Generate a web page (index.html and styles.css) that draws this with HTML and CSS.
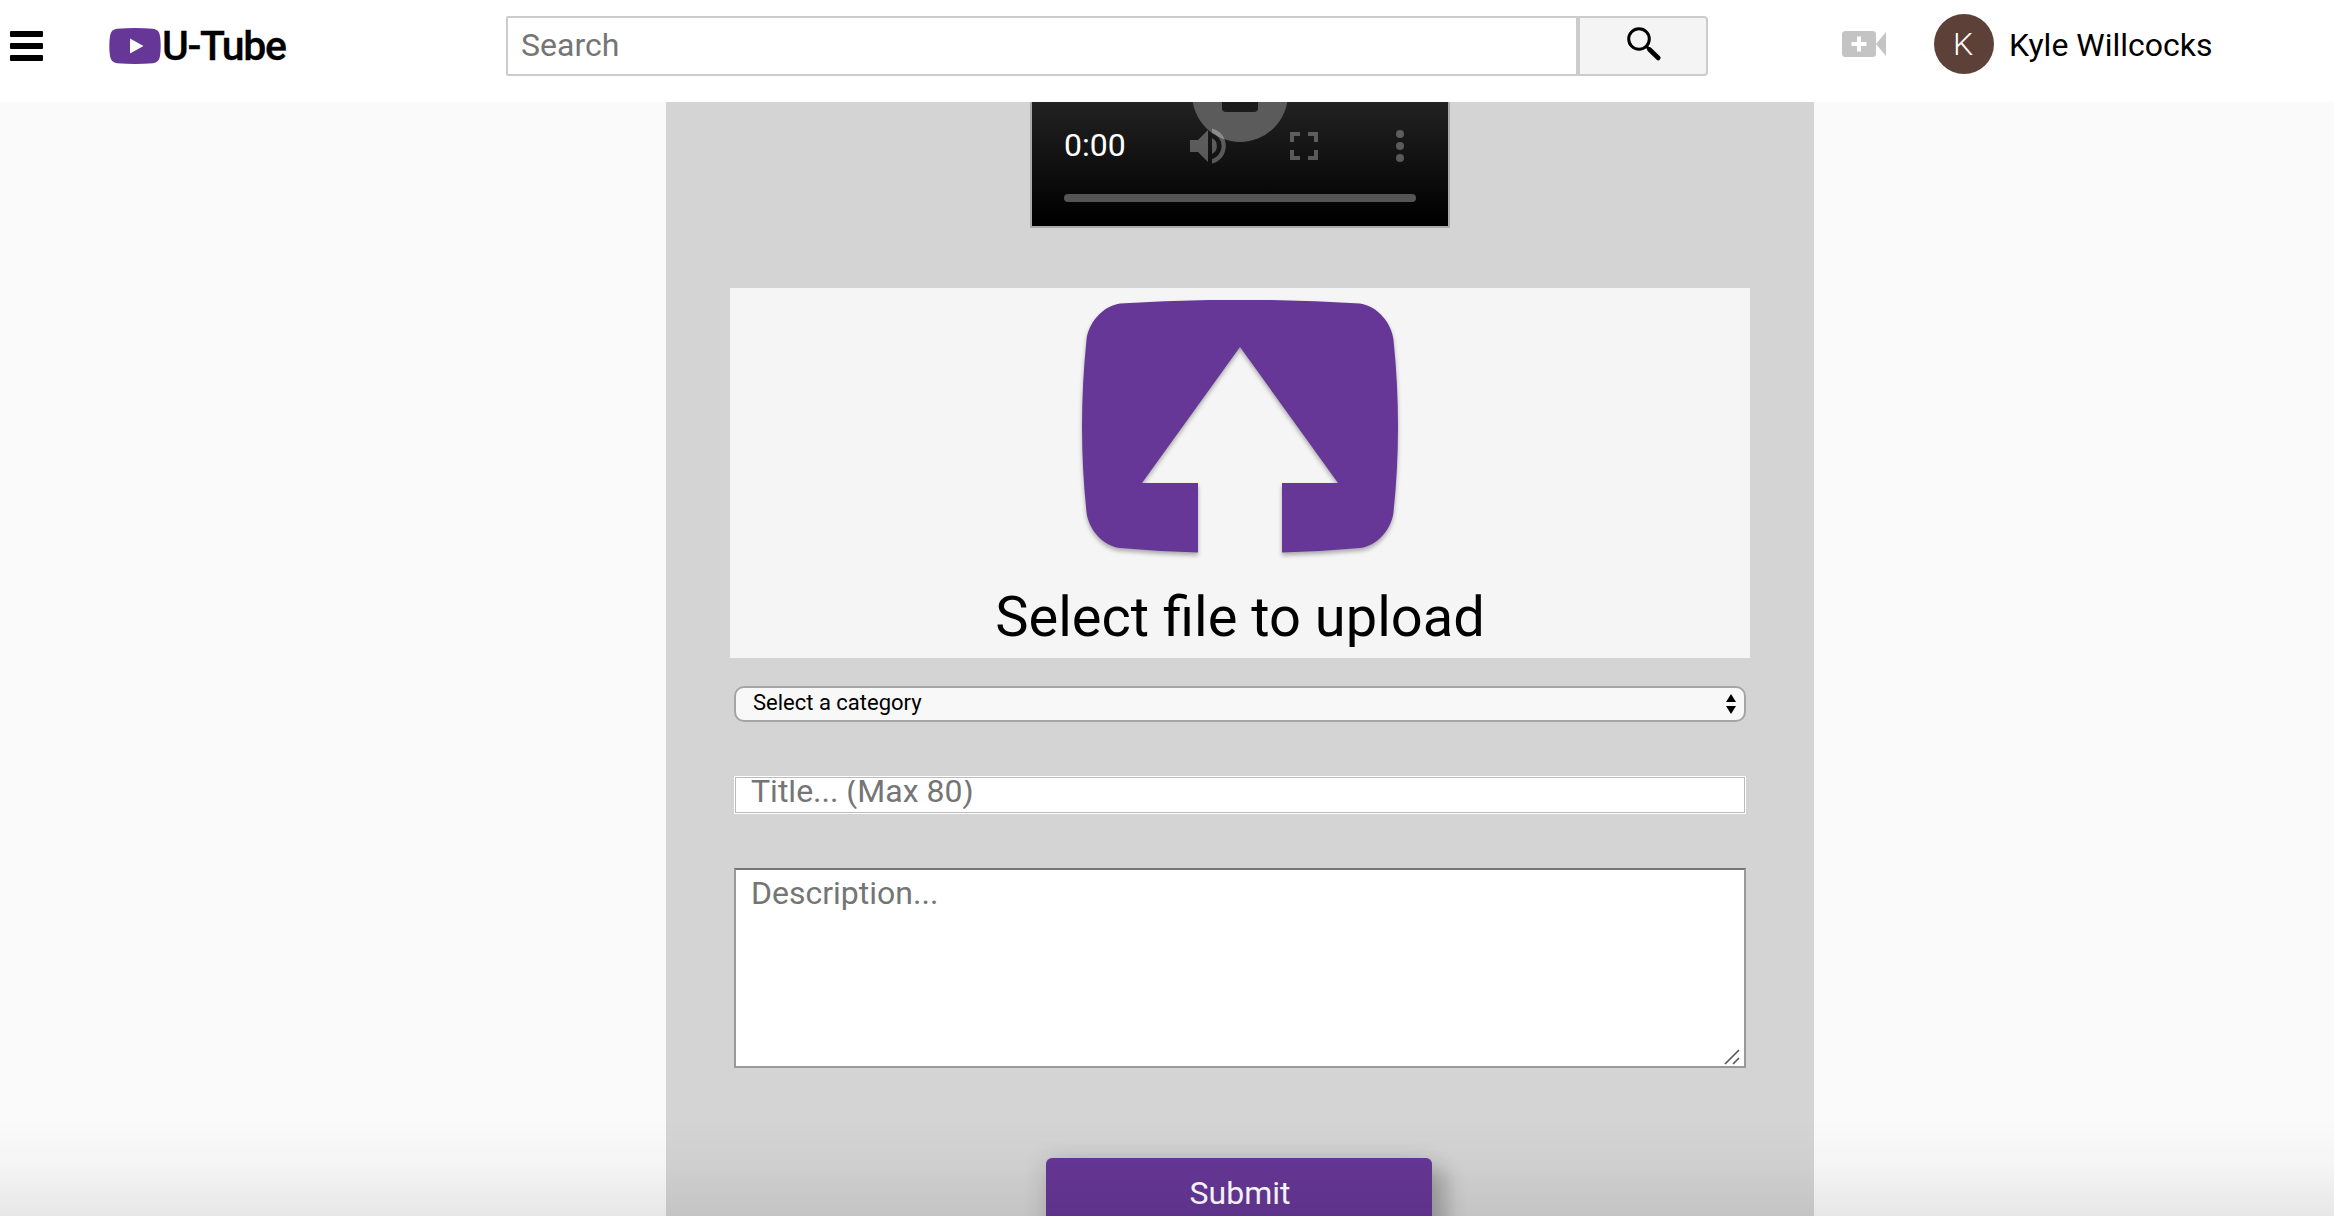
FILE: index.html
```html
<!DOCTYPE html>
<html lang="en">
<head>
<meta charset="utf-8">
<title>U-Tube</title>
<link rel="stylesheet" href="styles.css">
</head>
<body>
<header class="header">
  <button class="menu" aria-label="Menu"><span></span><span></span><span></span></button>
  <a class="brand">
    <svg class="brand-mark" viewBox="0 0 52 36"><path d="M8 .8Q26-.8 44 .8Q50 1.400 51 8Q52.400 18 51 28Q50 34.600 44 35.200Q26 36.800 8 35.200Q2 34.600 1 28Q-.4 18 1 8Q2 1.400 8 .8Z" fill="#663796"/><path d="M21 10.500V25.500L34.500 18Z" fill="#fff"/></svg>
    <span class="brand-name">U-Tube</span>
  </a>
  <form class="search">
    <input class="search-input" type="text" placeholder="Search">
    <button class="search-button" type="button" aria-label="Search">
      <svg width="36" height="36" viewBox="0 0 36 36"><circle cx="13" cy="13" r="10.300" fill="none" stroke="#000" stroke-width="3"/><path d="M20 20L24 24" stroke="#000" stroke-width="3"/><path d="M23.500 23.500L32.300 32" stroke="#000" stroke-width="4.600" stroke-linecap="round"/></svg>
    </button>
  </form>
  <svg class="camera" width="44" height="26" viewBox="0 0 44 26"><rect width="34" height="26" rx="3.500" fill="#c4c4c4"/><path d="M34 13L44 1V25Z" fill="#c4c4c4"/><path d="M17 5.500V20.500M9.500 13H24.500" stroke="#fff" stroke-width="4"/></svg>
  <div class="avatar">K</div>
  <span class="user">Kyle Willcocks</span>
</header>
<main class="panel">
  <div class="video">
    <div class="play"><i></i></div>
    <div class="controls">
      <span class="time">0:00</span>
      <svg class="volume" width="36" height="36" viewBox="0 0 36 36"><path d="M0 12H8L18 2V34L8 24H0ZM22 10A9 9 0 0 1 22 26ZM22 .5A18 18 0 0 1 22 35.500V31.300A14 14 0 0 0 22 4.700Z"/></svg>
      <svg class="fullscreen" width="28" height="28" viewBox="0 0 28 28"><path d="M0 0H10V4H4V10H0ZM18 0H28V10H24V4H18ZM0 18H4V24H10V28H0ZM24 18H28V28H18V24H24Z"/></svg>
      <svg class="more" width="8" height="32" viewBox="0 0 8 32"><circle cx="4" cy="4" r="4"/><circle cx="4" cy="16" r="4"/><circle cx="4" cy="28" r="4"/></svg>
    </div>
    <div class="progress"></div>
  </div>
  <section class="upload">
    <svg class="upload-icon" width="316" height="262" viewBox="0 0 316 262"><path d="M38 3.500Q158-4 278 3.500C296 6 310 24 311.500 40Q320.500 127 311.500 212C310 228 296 246 278 248Q240 251.500 200 252.500V183H256L158 47L60 183H116V252.500Q76 251.500 38 248C20 246 6 228 4.500 212Q-4.500 127 4.500 40C6 24 20 6 38 3.500Z" fill="#663796"/></svg>
    <span class="upload-label">Select file to upload</span>
  </section>
  <div class="select">
    <span>Select a category</span>
    <svg width="10" height="20" viewBox="0 0 10 20"><path d="M0 8L5 0L10 8ZM0 12H10L5 20Z"/></svg>
  </div>
  <div class="title-field"><span>Title... (Max 80)</span></div>
  <div class="description">
    <span>Description...</span>
    <svg width="16" height="16" viewBox="0 0 16 16"><path d="M1 15L15 1M9 15L15 9" stroke="#555" stroke-width="1.600"/></svg>
  </div>
  <button class="submit">Submit</button>
</main>
<div class="fade"></div>
</body>
</html>
```
FILE: styles.css
```css
* { box-sizing: border-box; }
body {
  margin: 0;
  height: 1216px;
  overflow: hidden;
  background: #fafafa;
  color: #000;
  font: 32px/38px Roboto, sans-serif;
}
button { border: 0; padding: 0; font: inherit; }
svg { display: block; flex: none; }

.header {
  position: relative;
  z-index: 1;
  display: flex;
  align-items: flex-start;
  height: 102px;
  padding-left: 10px;
  background: #fff;
}
.menu {
  display: flex;
  flex-direction: column;
  gap: 6px;
  width: 33px;
  margin-top: 31px;
  background: none;
}
.menu span { height: 6px; border-radius: 1px; background: #000; }
.brand { display: flex; width: 463px; padding: 28px 0 0 66px; }
.brand-mark { width: 52px; height: 36px; }
.brand-name {
  margin: -1px 0 0 1px;
  font-size: 41px;
  font-weight: 500;
  letter-spacing: -1.4px;
  -webkit-text-stroke: .3px #000;
}
.search { display: flex; width: 1202px; height: 60px; margin-top: 16px; }
.search-input {
  width: 1072px;
  padding: 0 13px 2px;
  border: 2px solid #ccc;
  border-radius: 2px 0 0 2px;
  background: #fff;
  font: inherit;
}
.search-input::placeholder { color: #757575; }
.search-button {
  display: flex;
  align-items: flex-start;
  width: 130px;
  padding: 8px 0 0 46px;
  border: 2px solid #ccc;
  border-radius: 0 4px 4px 0;
  background: #f4f4f4;
}
.camera { margin: 31px 0 0 134px; }
.avatar {
  width: 60px;
  height: 60px;
  margin: 14px 0 0 48px;
  padding-right: 2px;
  border-radius: 50%;
  background: #5d4037;
  color: #fff;
  font-weight: 300;
  line-height: 61px;
  text-align: center;
}
.user { margin: 26px 0 0 15px; }

.panel {
  display: flex;
  flex-direction: column;
  align-items: center;
  width: 1148px;
  height: 1114px;
  margin-left: 666px;
  background: #d4d4d4;
}
.panel > * { flex: none; }
.video {
  position: relative;
  width: 420px;
  height: 126px;
  overflow: hidden;
  border: 2px solid #aaa;
  border-top: 0;
  background: linear-gradient(#222, #000 95%);
}
.play {
  position: absolute;
  left: 160px;
  top: -56px;
  width: 96px;
  height: 96px;
  border-radius: 50%;
  background: #5b5b5b;
}
.play i {
  display: block;
  width: 36px;
  height: 36px;
  margin: 30px;
  border-radius: 4px;
  background: #1b1b1b;
}
.controls {
  position: relative;
  display: flex;
  align-items: center;
  height: 88px;
  padding: 0 44px 0 32px;
  fill: rgba(255, 255, 255, .3);
}
.time { width: 126px; padding-bottom: 2px; color: #fff; }
.fullscreen { margin-left: 64px; }
.more { margin-left: 78px; }
.progress { height: 8px; margin: 4px 32px 0; border-radius: 4px; background: #545454; }

.upload {
  display: flex;
  flex-direction: column;
  align-items: center;
  width: 1020px;
  height: 370px;
  margin-top: 60px;
  padding-top: 12px;
  background: #f5f5f5;
}
.upload-icon { filter: drop-shadow(0 3px 2px rgba(0, 0, 0, .3)); }
.upload-label { margin-top: 22px; font-size: 56px; line-height: 66px; }
.select {
  display: flex;
  justify-content: space-between;
  width: 1012px;
  height: 36px;
  margin-top: 28px;
  padding: 4px 8px 0 17px;
  border: 2px solid #a5a5a5;
  border-radius: 10px;
  background: #f8f8f8;
  font-size: 22px;
  line-height: 22px;
}
.select svg { margin-top: 2px; }
.title-field {
  width: 1012px;
  height: 38px;
  margin-top: 54px;
  padding: 3px 16px;
  border: 1px solid #fff;
  outline: 1px solid #bbb;
  outline-offset: -2px;
  background: #fff;
  color: #757575;
}
.title-field span { display: flex; align-items: flex-end; height: 30px; overflow: hidden; }
.description {
  display: flex;
  justify-content: space-between;
  width: 1012px;
  height: 200px;
  margin-top: 54px;
  padding: 4px 4px 0 15px;
  border: 2px solid #999;
  border-top-color: #767676;
  background: #fff;
  color: #757575;
}
.description svg { align-self: flex-end; margin-bottom: 1px; }
.submit {
  width: 386px;
  height: 80px;
  margin: 90px 2px 0 0;
  padding: 0 0 10px 2px;
  border-radius: 6px;
  background: #663796;
  color: #fff;
  box-shadow: 16px 12px 20px rgba(0, 0, 0, .18), 0 4px 24px rgba(0, 0, 0, .16);
}
.fade {
  position: fixed;
  z-index: 2;
  inset: auto 0 0;
  height: 96px;
  background: linear-gradient(transparent, rgba(0, 0, 0, .018) 45%, rgba(0, 0, 0, .075));
}
```
